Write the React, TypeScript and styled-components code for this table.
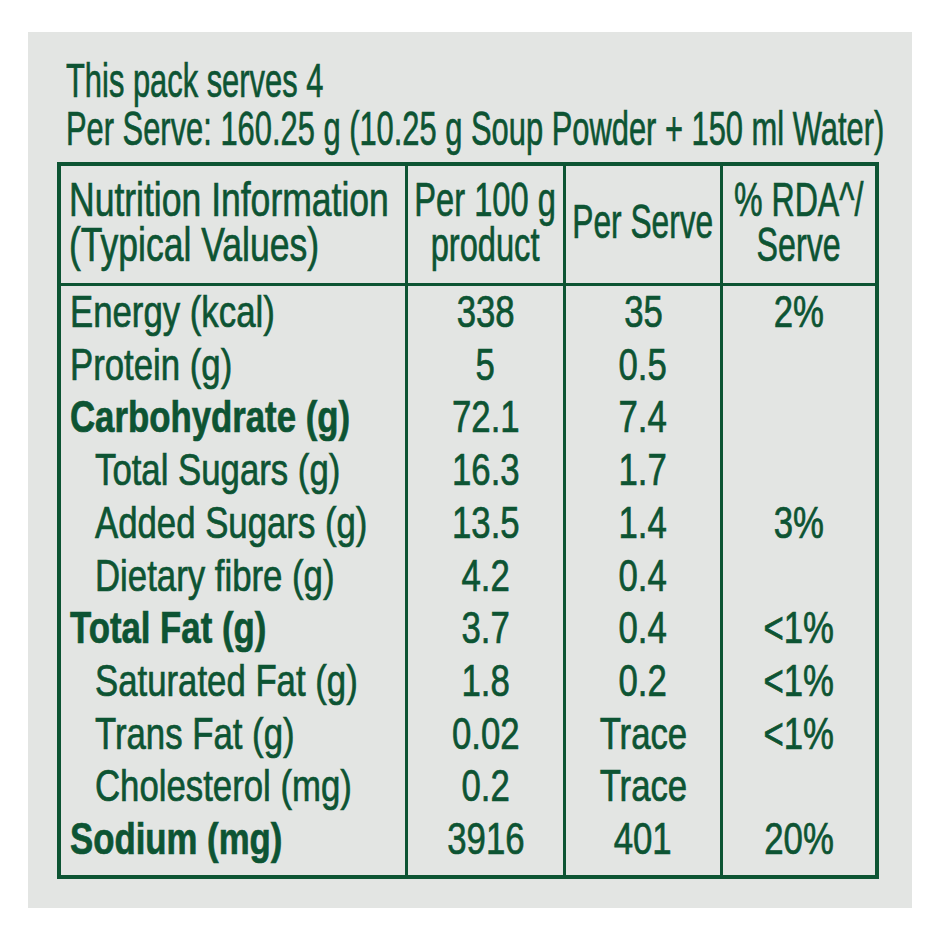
import React from "react";
import styled, { createGlobalStyle } from "styled-components";

const GREEN = "#0d5433";

const GlobalStyle = createGlobalStyle`
  html, body {
    margin: 0;
    padding: 0;
    background: #ffffff;
  }
  body {
    font-family: "Liberation Sans", Arial, sans-serif;
    color: ${GREEN};
  }
`;

const Page = styled.div`
  padding: 32px 28px;
  width: 940px;
  box-sizing: border-box;
`;

const Panel = styled.section`
  background: #e3e5e3;
  padding: 24px 33px 29px 29px;
  display: flex;
  flex-direction: column;
  gap: 10px;
  -webkit-text-stroke: 0.7px ${GREEN};
`;

/* The label's typeface is a tightly condensed sans; Liberation Sans is
   narrowed horizontally to match its widths. */
const Headline = styled.div`
  margin-left: 9px;
  font-size: 49px;
  line-height: 48px;
  white-space: nowrap;
  transform: scaleX(0.63);
  transform-origin: left top;
`;

const Table = styled.div`
  display: grid;
  grid-template-columns: 347px 158px 157px 152px;
  border: 4px solid ${GREEN};
`;

const HeadCell = styled.div<{ $first?: boolean; $last?: boolean }>`
  box-sizing: border-box;
  height: 120px;
  border-bottom: 3px solid ${GREEN};
  border-right: ${(p) => (p.$last ? "none" : `3px solid ${GREEN}`)};
  display: flex;
  align-items: center;
  justify-content: ${(p) => (p.$first ? "flex-start" : "center")};
  padding: 0 0 6px ${(p) => (p.$first ? "8px" : "0")};
`;

const HeadText = styled.span<{ $sx: number; $left?: boolean }>`
  display: inline-block;
  font-size: 48px;
  line-height: 45px;
  white-space: nowrap;
  text-align: ${(p) => (p.$left ? "left" : "center")};
  transform: scaleX(${(p) => p.$sx});
  transform-origin: ${(p) => (p.$left ? "left center" : "center center")};
`;

const Cell = styled.div<{
  $first?: boolean;
  $last?: boolean;
  $indent?: boolean;
  $bold?: boolean;
  $end?: boolean;
}>`
  font-size: 44px;
  line-height: 52.7px;
  white-space: nowrap;
  font-weight: ${(p) => (p.$bold ? 700 : 400)};
  text-align: ${(p) => (p.$first ? "left" : "center")};
  padding-left: ${(p) => (p.$first ? (p.$indent ? "34px" : "9px") : "0")};
  padding-bottom: ${(p) => (p.$end ? "9px" : "0")};
  border-right: ${(p) => (p.$last ? "none" : `3px solid ${GREEN}`)};
`;

const CellText = styled.span<{ $left?: boolean }>`
  display: inline-block;
  transform: scaleX(0.79);
  transform-origin: ${(p) => (p.$left ? "left center" : "center center")};
`;

type Row = {
  label: string;
  per100: string;
  serve: string;
  rda: string;
  bold?: boolean;
  indent?: boolean;
};

const rows: Row[] = [
  { label: "Energy (kcal)", per100: "338", serve: "35", rda: "2%" },
  { label: "Protein (g)", per100: "5", serve: "0.5", rda: "" },
  { label: "Carbohydrate (g)", per100: "72.1", serve: "7.4", rda: "", bold: true },
  { label: "Total Sugars (g)", per100: "16.3", serve: "1.7", rda: "", indent: true },
  { label: "Added Sugars (g)", per100: "13.5", serve: "1.4", rda: "3%", indent: true },
  { label: "Dietary fibre (g)", per100: "4.2", serve: "0.4", rda: "", indent: true },
  { label: "Total Fat (g)", per100: "3.7", serve: "0.4", rda: "<1%", bold: true },
  { label: "Saturated Fat (g)", per100: "1.8", serve: "0.2", rda: "<1%", indent: true },
  { label: "Trans Fat (g)", per100: "0.02", serve: "Trace", rda: "<1%", indent: true },
  { label: "Cholesterol (mg)", per100: "0.2", serve: "Trace", rda: "", indent: true },
  { label: "Sodium (mg)", per100: "3916", serve: "401", rda: "20%", bold: true },
];

export default function App() {
  return (
    <>
      <GlobalStyle />
      <Page>
        <Panel>
          <Headline>
            This pack serves 4
            <br />
            Per Serve: 160.25 g (10.25 g Soup Powder + 150 ml Water)
          </Headline>
          <Table>
            <HeadCell $first>
              <HeadText $sx={0.74} $left>
                Nutrition Information
                <br />
                (Typical Values)
              </HeadText>
            </HeadCell>
            <HeadCell>
              <HeadText $sx={0.68}>
                Per 100 g
                <br />
                product
              </HeadText>
            </HeadCell>
            <HeadCell>
              <HeadText $sx={0.66}>Per Serve</HeadText>
            </HeadCell>
            <HeadCell $last>
              <HeadText $sx={0.67}>
                % RDA^/
                <br />
                Serve
              </HeadText>
            </HeadCell>
            {rows.map((r, i) => {
              const end = i === rows.length - 1;
              return (
                <React.Fragment key={r.label}>
                  <Cell $first $bold={r.bold} $indent={r.indent} $end={end}>
                    <CellText $left>{r.label}</CellText>
                  </Cell>
                  <Cell $end={end}>
                    <CellText>{r.per100}</CellText>
                  </Cell>
                  <Cell $end={end}>
                    <CellText>{r.serve}</CellText>
                  </Cell>
                  <Cell $last $end={end}>
                    <CellText>{r.rda}</CellText>
                  </Cell>
                </React.Fragment>
              );
            })}
          </Table>
        </Panel>
      </Page>
    </>
  );
}
